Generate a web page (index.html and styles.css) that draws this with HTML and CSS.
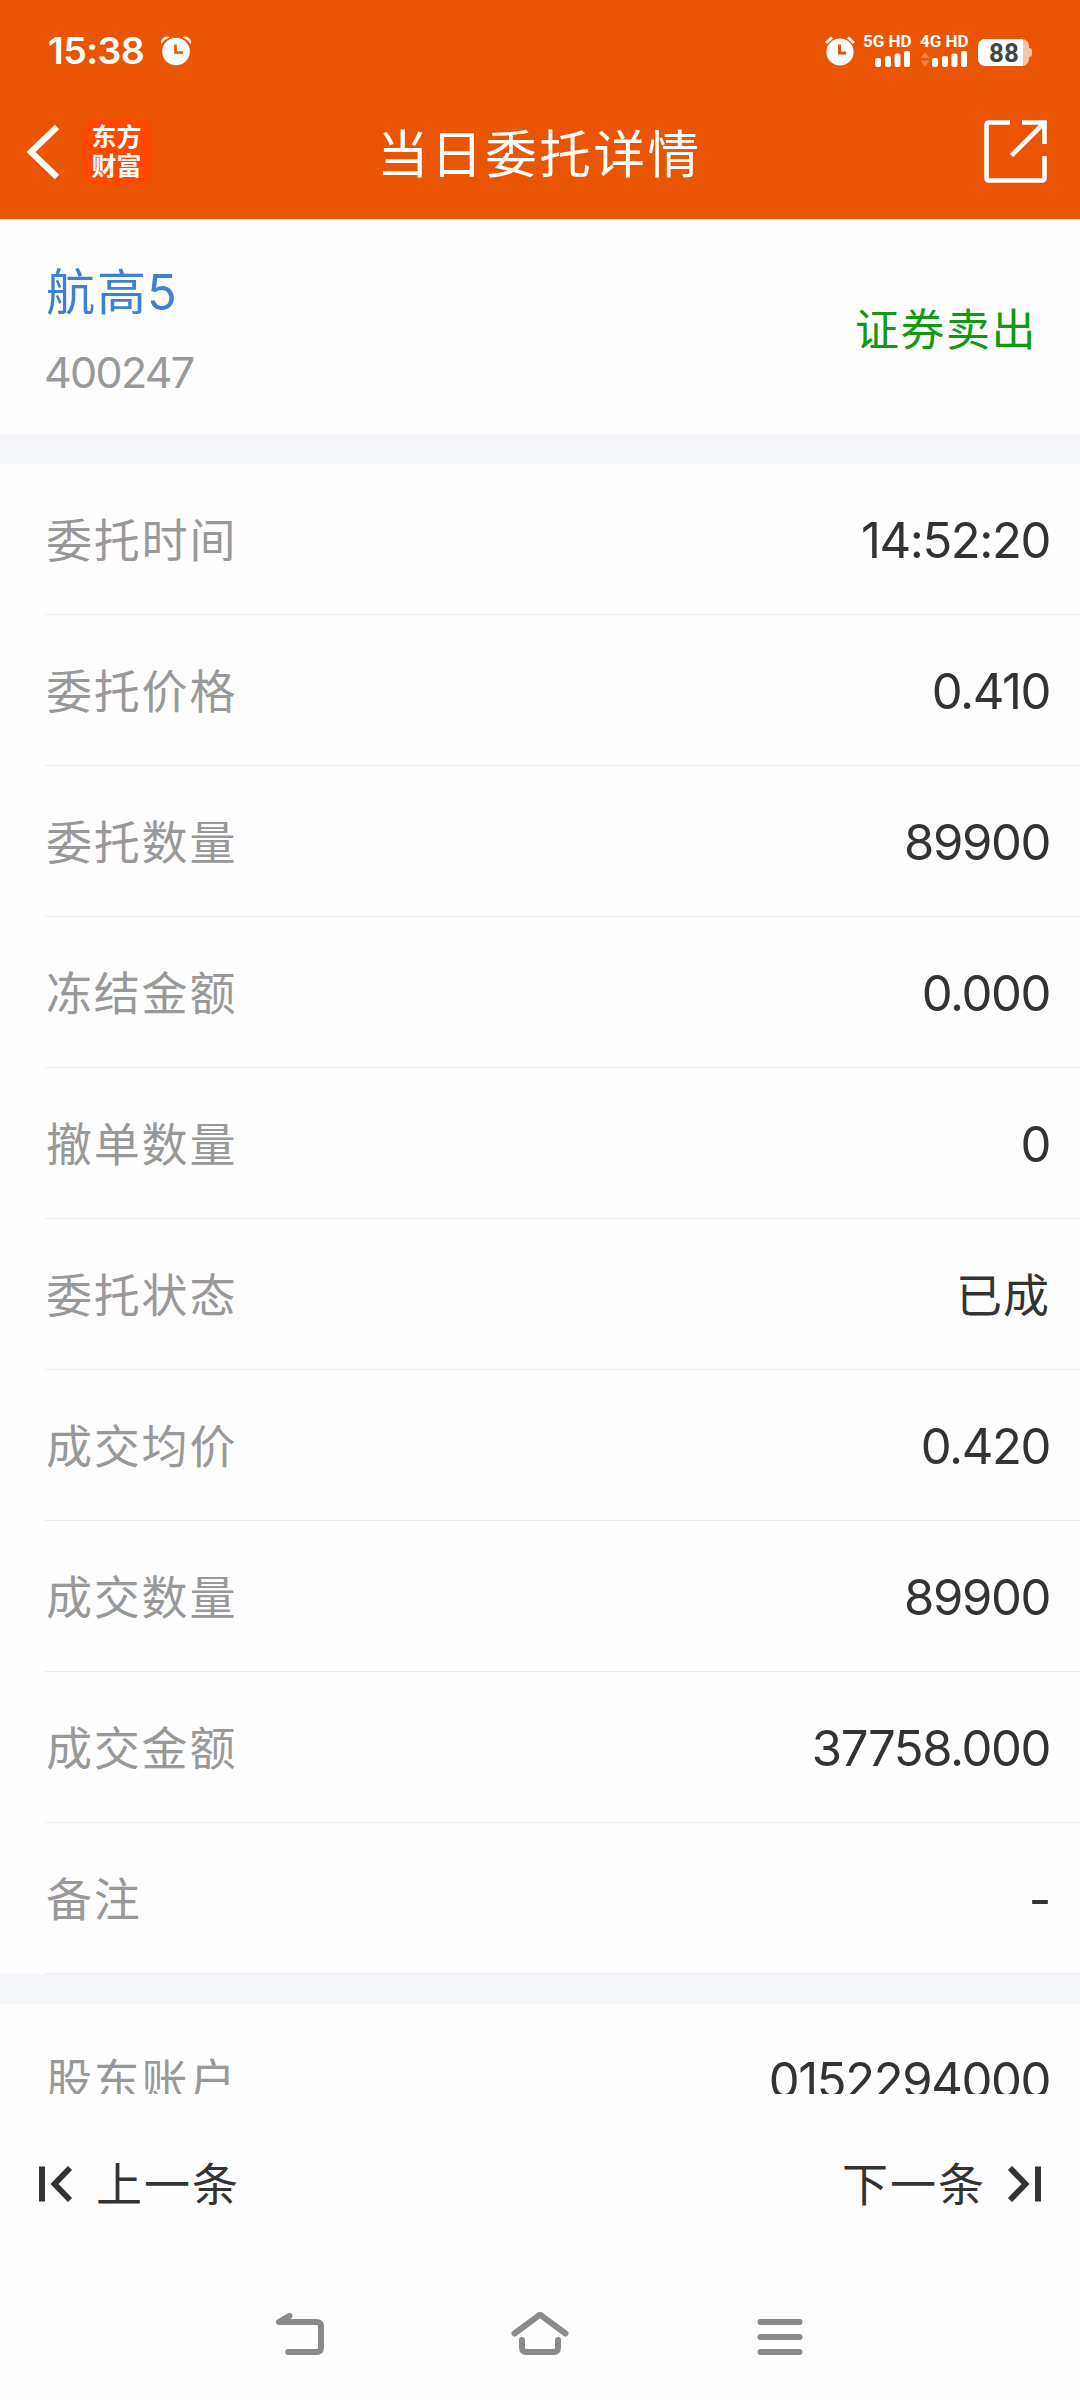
FILE: index.html
```html
<!DOCTYPE html>
<html lang="zh-CN">
<head>
<meta charset="utf-8">
<title>当日委托详情</title>
<link rel="stylesheet" href="styles.css">
</head>
<body>
<div class="screen">
  <div class="top">
    <div class="status">
      <span class="clock">15:38</span>
      <svg class="alarm-left" width="30" height="30" viewBox="0 0 30 30"><path d="M0 8A6.500 6.500 0 0 1 9 1Q4 3 0 8ZM30 8A6.500 6.500 0 0 0 21 1Q26 3 30 8Z" fill="#fff"/><circle cx="15" cy="15.500" r="13.800" fill="#fff"/><path d="M14.500 8.500V16.500H22" fill="none" stroke="#ea5504" stroke-width="2.600"/></svg>
      <svg class="alarm-right" width="30" height="30" viewBox="0 0 30 30"><path d="M1 7L7 1.500M29 7L23 1.500" stroke="#fff" stroke-width="3"/><circle cx="15" cy="16" r="13.600" fill="#fff"/><path d="M14.500 8.500V17H21" fill="none" stroke="#ea5504" stroke-width="3"/></svg>
      <div class="signal five"><span class="net">5G HD</span><svg width="48" height="18" viewBox="0 0 48 18" fill="#fff"><rect x="12" y="8" width="6" height="9" rx="2"/><rect x="22" y="6" width="6" height="11" rx="2"/><rect x="31.500" y="3.500" width="6" height="13.500" rx="2"/><rect x="41" y="1" width="6" height="16" rx="2"/></svg></div>
      <div class="signal four"><span class="net">4G HD</span><svg width="48" height="18" viewBox="0 0 48 18" fill="#fff"><path d="M0.500 8L5 2L9.500 8ZM0.500 10.500H9.500L5 17Z" fill="#f58148"/><rect x="12" y="8" width="6" height="9" rx="2"/><rect x="22" y="6" width="6" height="11" rx="2"/><rect x="31.500" y="3.500" width="6" height="13.500" rx="2"/><rect x="41" y="1" width="6" height="16" rx="2"/></svg></div>
      <div class="battery"><span class="level">88</span></div>
    </div>
    <div class="nav">
      <svg class="back" width="34" height="56" viewBox="0 0 34 56"><path d="M31 3L5 28L31 53" fill="none" stroke="#fff" stroke-width="6.200"/></svg>
      <div class="logo"><span>东方</span><span>财富</span></div>
      <h1 class="title">当日委托详情</h1>
      <svg class="share" width="64" height="64" viewBox="0 0 64 64" fill="none" stroke="#fff" stroke-width="4.600"><path d="M26 2.500H5Q2.500 2.500 2.500 5V58Q2.500 60.500 5 60.500H58Q60.500 60.500 60.500 58V36M38 2.500H60.500V24M60 3L27.500 35.500"/></svg>
    </div>
  </div>
  <div class="stock">
    <div class="stock-id"><div class="name">航高<span class="num">5</span></div><div class="code num">400247</div></div>
    <div class="side">证券卖出</div>
  </div>
  <div class="scroll">
    <dl class="group">
      <div class="row"><dt>委托时间</dt><dd>14:52:20</dd></div>
      <div class="row"><dt>委托价格</dt><dd>0.410</dd></div>
      <div class="row"><dt>委托数量</dt><dd>89900</dd></div>
      <div class="row"><dt>冻结金额</dt><dd>0.000</dd></div>
      <div class="row"><dt>撤单数量</dt><dd>0</dd></div>
      <div class="row"><dt>委托状态</dt><dd class="word">已成</dd></div>
      <div class="row"><dt>成交均价</dt><dd>0.420</dd></div>
      <div class="row"><dt>成交数量</dt><dd>89900</dd></div>
      <div class="row"><dt>成交金额</dt><dd>37758.000</dd></div>
      <div class="row"><dt>备注</dt><dd>-</dd></div>
    </dl>
    <dl class="group">
      <div class="row"><dt>股东账户</dt><dd>0152294000</dd></div>
    </dl>
  </div>
  <div class="pager">
    <div class="page-link prev"><svg width="34" height="36" viewBox="0 0 34 36"><path d="M3 .5V35.500" stroke="#333" stroke-width="6"/><path d="M31 2L15.500 18L31 34" fill="none" stroke="#333" stroke-width="5.800"/></svg><span>上一条</span></div>
    <div class="page-link next"><span>下一条</span><svg width="34" height="36" viewBox="0 0 34 36"><path d="M31 .5V35.500" stroke="#333" stroke-width="6"/><path d="M3 2L18.500 18L3 34" fill="none" stroke="#333" stroke-width="5.800"/></svg></div>
  </div>
  <div class="system">
    <svg width="60" height="52" viewBox="270 2308 60 52"><path d="M289.500 2315.800L279 2322H316.500Q321 2322 321 2326.500V2347.500Q321 2352 316.500 2352H288.200"/></svg>
    <svg width="60" height="52" viewBox="510 2308 60 52"><path d="M514.500 2333.500L540 2314.700L565.500 2333.500M522 2340V2347.500Q522 2352 526.500 2352H553.500Q558 2352 558 2347.500V2340"/></svg>
    <svg width="60" height="52" viewBox="750 2308 60 52"><path d="M760.500 2322H799.500M760.500 2337H799.500M760.500 2352H799.500"/></svg>
  </div>
</div>
</body>
</html>
```
FILE: styles.css
```css
* { box-sizing: border-box; }
body {
  margin: 0;
  font-family: "Noto Sans CJK SC", sans-serif;
  color: #333;
  background: #fefefe;
}
h1, dl, dd { margin: 0; }
svg { display: block; flex: none; }
.screen { width: 1080px; height: 2400px; display: flex; flex-direction: column; overflow: hidden; }
.top { height: 219px; background: #ea5504; color: #fff; flex: none; }
.status { height: 100px; display: flex; align-items: flex-start; padding: 0 48px; }
.clock { width: 113px; margin-top: 28px; font: 600 37.500px/46px Inter, sans-serif; letter-spacing: -0.600px; white-space: nowrap; }
.alarm-left { margin-top: 36px; }
.alarm-right { margin: 36px 8px 0 auto; }
.signal { width: 48px; margin-top: 32px; }
.signal.four { margin-left: 9px; }
.net { display: block; font: 700 17px/18px Roboto, sans-serif; white-space: nowrap; }
.battery {
  position: relative;
  width: 51px; height: 27px; margin: 39px 3px 0 10px;
  border-radius: 7px;
  background: linear-gradient(90deg, #fff 45px, #fbc3a4 45px);
  color: #444;
}
.battery::after { content: ""; position: absolute; left: 51px; top: 9px; width: 3px; height: 9px; border-radius: 0 3px 3px 0; background: #fbc3a4; }
.level { display: block; padding-left: 11px; font: 700 26px/28px Roboto, sans-serif; }
.nav { height: 104px; display: flex; align-items: center; padding: 0 32px 0 26px; }
.logo {
  width: 68px; height: 68px; margin-left: 23px;
  border-radius: 14px; background: #ff4800; color: #fff;
  display: flex; flex-direction: column; align-items: center; padding: 3px 1px 0 0;
  font: 700 25px/29px "Noto Sans CJK SC", sans-serif;
}
.title { flex: 1; padding: 0 0 3px 226px; font-size: 51.500px; font-weight: 400; line-height: 74px; letter-spacing: 2.600px; white-space: nowrap; }
.num { font-family: Inter, sans-serif; }
.stock { flex: none; height: 215px; display: flex; justify-content: space-between; align-items: center; padding: 0 43px 0 46px; }
.name { font-size: 49px; line-height: 74px; letter-spacing: 2px; color: #3e80d2; }
.name .num { margin-left: -1px; }
.code { font-size: 43px; line-height: 60px; margin: 12px 0 0 -2px; letter-spacing: -1.700px; color: #999; }
.side { font-size: 44px; line-height: 64px; letter-spacing: 1.500px; color: #119911; }
.scroll { flex: none; height: 1660px; overflow: hidden; }
.group { border-top: 30px solid #f6f7fa; }
.row { height: 151px; display: flex; justify-content: space-between; align-items: center; padding: 0 30px 0 46px; background: linear-gradient(#ededef, #ededef) 45px 100% / 1035px 1px no-repeat; }
.row dt { font-size: 46px; line-height: 68px; letter-spacing: 1.800px; padding-bottom: 5px; color: #999; }
.row dd { font: 400 49px/60px Inter, sans-serif; letter-spacing: -1.400px; padding-top: 2px; }
.row .word { font-family: "Noto Sans CJK SC", sans-serif; font-size: 46px; letter-spacing: 1px; padding: 0 0 5px; }
.pager { flex: none; height: 181px; display: flex; justify-content: space-between; align-items: center; padding: 0 39px 2px; }
.page-link { display: flex; align-items: center; gap: 23px; font-size: 46px; line-height: 68px; letter-spacing: 2px; }
.page-link span { padding-bottom: 5px; }
.page-link.next { gap: 21px; }
.system { height: 125px; display: flex; justify-content: center; gap: 180px; padding-top: 33px; }
.system path { fill: none; stroke: #8a8a8a; stroke-width: 6px; stroke-linecap: round; stroke-linejoin: round; }
```
